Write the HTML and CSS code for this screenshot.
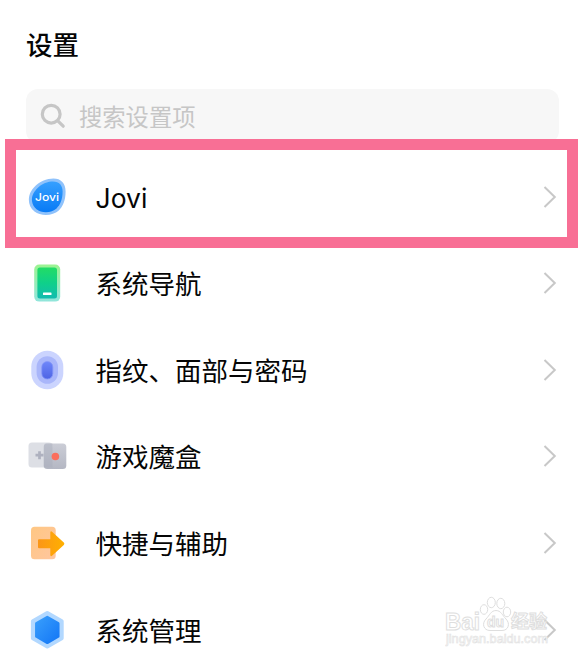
FILE: index.html
```html
<!DOCTYPE html>
<html lang="zh-CN">
<head>
<meta charset="utf-8">
<title>设置</title>
<link rel="stylesheet" href="styles.css">
</head>
<body>
<main class="screen">
  <h1 class="title">设置</h1>
  <div class="search">
    <svg class="search-icon" viewBox="0 0 26 26"><circle cx="11.2" cy="11.2" r="8.9"/><path d="M17.8 17.8L23.2 23.2"/></svg>
    <span>搜索设置项</span>
  </div>
  <ul class="list">
    <li class="row">
      <svg class="icon" viewBox="0 0 40 40">
        <defs><linearGradient id="jovi" x1="0" y1="0" x2="0" y2="1"><stop offset="0" stop-color="#36a0ff"/><stop offset="1" stop-color="#087af5"/></linearGradient></defs>
        <path fill="#8fc2fb" d="M21.500 2C32 -.3 38.600 4.500 38.600 14.500C38.600 23 36 29.500 31.500 33.800C26 39 13.500 39.400 7.500 34.500C1 29.500 .5 20.500 4 14.500C7.500 8.500 14 3.600 21.500 2Z"/>
        <path fill="url(#jovi)" d="M22.300 4.800C31 3.200 35.600 7 35.600 14.800C35.600 21.800 33.500 27.500 29.500 31.500C25 36 14.500 36.400 9.500 32.300C4.500 28 3.700 21.500 6.500 16.300C9.800 10.500 15.500 6.200 22.300 4.800Z"/>
        <text class="jovi-mark" x="8" y="24" textLength="24" lengthAdjust="spacingAndGlyphs">Jovi</text>
      </svg>
      <span class="label latin">Jovi</span>
      <svg class="chevron" viewBox="0 0 14 24"><path d="M1.500 2L11.800 12L1.500 22"/></svg>
    </li>
    <li class="row">
      <svg class="icon" viewBox="0 0 40 40">
        <defs>
          <linearGradient id="navOuter" x1="0" y1="0" x2="0" y2="1"><stop offset="0" stop-color="#9cf391"/><stop offset="1" stop-color="#91e5dc"/></linearGradient>
          <linearGradient id="navInner" x1="0" y1="0" x2="0" y2="1"><stop offset="0" stop-color="#22dc65"/><stop offset=".5" stop-color="#0fd08a"/><stop offset="1" stop-color="#13bbb0"/></linearGradient>
        </defs>
        <rect x="7.200" y="1.600" width="26" height="37" rx="5" fill="url(#navOuter)"/>
        <rect x="10.400" y="4.600" width="19.600" height="31" rx="2.500" fill="url(#navInner)"/>
        <rect x="16" y="29.500" width="8.500" height="2.500" rx=".6" fill="#fff"/>
      </svg>
      <span class="label">系统导航</span>
      <svg class="chevron" viewBox="0 0 14 24"><path d="M1.500 2L11.800 12L1.500 22"/></svg>
    </li>
    <li class="row">
      <svg class="icon" viewBox="0 0 40 40">
        <defs><linearGradient id="finger" x1="0" y1="0" x2="0" y2="1"><stop offset="0" stop-color="#6f87fa"/><stop offset="1" stop-color="#4e64e4"/></linearGradient></defs>
        <rect x="4.300" y=".8" width="32" height="38.500" rx="16" fill="#cbd4fe"/>
        <rect x="9.600" y="6.200" width="21.400" height="27.600" rx="10.700" fill="#a9b6fa"/>
        <rect x="14.800" y="11.500" width="11" height="17.500" rx="5.500" fill="url(#finger)" stroke="#8496f8" stroke-width=".8"/>
      </svg>
      <span class="label">指纹、面部与密码</span>
      <svg class="chevron" viewBox="0 0 14 24"><path d="M1.500 2L11.800 12L1.500 22"/></svg>
    </li>
    <li class="row">
      <svg class="icon" viewBox="0 0 40 40">
        <defs><linearGradient id="game" x1="0" y1="0" x2="0" y2="1"><stop offset="0" stop-color="#cbcdd6"/><stop offset="1" stop-color="#b4b7c3"/></linearGradient></defs>
        <rect x="1.500" y="6.600" width="24" height="25" rx="3.500" fill="#dddfe5"/>
        <rect x="16.800" y="7.600" width="22.500" height="25.400" rx="3.500" fill="url(#game)"/>
        <path fill="#a6aab8" fill-opacity=".4" d="M19.300 7.600H25.400V31.600H16.800V11Q16.800 7.600 19.300 7.600Z"/>
        <path d="M12.500 15.200V23.200M8.500 19.200H16.500" stroke="#aeb1bf" stroke-width="2.700"/>
        <circle cx="28.400" cy="20.500" r="3.800" fill="#fb6e5d"/>
      </svg>
      <span class="label">游戏魔盒</span>
      <svg class="chevron" viewBox="0 0 14 24"><path d="M1.500 2L11.800 12L1.500 22"/></svg>
    </li>
    <li class="row">
      <svg class="icon" viewBox="0 0 40 40">
        <defs>
          <linearGradient id="card" x1="0" y1="0" x2="1" y2="1"><stop offset="0" stop-color="#ffc783"/><stop offset="1" stop-color="#ffc69f"/></linearGradient>
          <linearGradient id="arrow" x1="0" y1="0" x2="1" y2="0"><stop offset="0" stop-color="#fb9618"/><stop offset="1" stop-color="#ffb000"/></linearGradient>
        </defs>
        <rect x="4" y="3.700" width="24.700" height="32.600" rx="3.500" fill="url(#card)"/>
        <path fill="url(#arrow)" d="M12 16.200Q11 16.200 11 17.200V24.300Q11 25.300 12 25.300H23.300V32Q23.600 34 25.300 32.600L36.800 22Q38 20.800 36.800 19.600L25.300 9Q23.600 7.500 23.300 9.500V16.200Z"/>
      </svg>
      <span class="label">快捷与辅助</span>
      <svg class="chevron" viewBox="0 0 14 24"><path d="M1.500 2L11.800 12L1.500 22"/></svg>
    </li>
    <li class="row">
      <svg class="icon" viewBox="0 0 40 40">
        <defs><linearGradient id="hex" x1="0" y1="0" x2="1" y2="1"><stop offset="0" stop-color="#389efc"/><stop offset="1" stop-color="#1477f6"/></linearGradient></defs>
        <path fill="#b2d8ff" stroke="#b2d8ff" stroke-width="4" stroke-linejoin="round" d="M20.300 3L34.700 11.300V28.300L20.300 36.600L5.900 28.300V11.300Z"/>
        <path fill="url(#hex)" stroke="url(#hex)" stroke-width="2.500" stroke-linejoin="round" d="M20.300 7L31.300 13.400V26.400L20.300 32.800L9.300 26.400V13.400Z"/>
      </svg>
      <span class="label">系统管理</span>
      <svg class="chevron" viewBox="0 0 14 24"><path d="M1.500 2L11.800 12L1.500 22"/></svg>
    </li>
  </ul>
  <div class="highlight"></div>
  <svg class="watermark" viewBox="0 0 112 54">
    <g class="outline">
      <text class="brand" x="0" y="34.500" textLength="35" lengthAdjust="spacingAndGlyphs">Bai</text>
      <path d="M51 15.500C46 15.500 44.500 20.500 41 24C36.500 28.500 38.500 35.500 45 35.500H57C63.500 35.500 65.500 28.500 61 24C57.500 20.500 56 15.500 51 15.500Z"/>
      <ellipse cx="39" cy="14.500" rx="3.700" ry="4.800"/><ellipse cx="46.300" cy="7.500" rx="4" ry="5.200"/><ellipse cx="55.800" cy="8.500" rx="4" ry="5.200"/><ellipse cx="62" cy="17" rx="3.700" ry="4.800"/>
      <text class="du" x="42" y="32" textLength="17" lengthAdjust="spacingAndGlyphs">du</text>
      <text class="cjk" x="66" y="33" textLength="36">经验</text>
    </g>
    <text class="site" x="1" y="47.500" textLength="102" lengthAdjust="spacingAndGlyphs">jingyan.baidu.com</text>
  </svg>
</main>
</body>
</html>
```
FILE: styles.css
```css
* { box-sizing: border-box; }
body {
  margin: 0;
  background: #fff;
  color: #050505;
  font-family: "Noto Sans CJK SC", sans-serif;
}
.screen {
  position: relative;
  width: 581px;
  height: 660px;
  overflow: hidden;
  padding: 24px 22px 0 26px;
}
.title {
  margin: 0;
  height: 40px;
  line-height: 40px;
  font-size: 26.5px;
  font-weight: 500;
}
.search {
  display: flex;
  align-items: center;
  gap: 13px;
  height: 54px;
  margin-top: 25px;
  padding-left: 14px;
  border-radius: 12px;
  background: #f7f7f7;
  color: #c6c6c6;
  font-size: 23.3px;
}
.search-icon {
  width: 26px;
  height: 26px;
  fill: none;
  stroke: #c6c6c6;
  stroke-width: 3.2;
  stroke-linecap: round;
}
.list {
  margin: 10.300px 0 0;
  padding: 0;
  list-style: none;
}
.row {
  display: flex;
  align-items: center;
  height: 86.600px;
  padding: 0 2px 0 1px;
}
.icon {
  width: 40px;
  height: 40px;
}
.label {
  flex: 1;
  margin-left: 28.600px;
  font-size: 26.500px;
  line-height: 40px;
}
.latin {
  margin-top: 3px;
  font-family: Inter, sans-serif;
  font-size: 26.500px;
}
.chevron {
  width: 14px;
  height: 24px;
  fill: none;
  stroke: #c8c8c8;
  stroke-width: 2;
}
.jovi-mark {
  fill: #fff;
  font: 500 11px Inter, sans-serif;
}
.highlight {
  position: absolute;
  left: 5px;
  top: 139px;
  width: 573px;
  height: 109px;
  border: 11px solid #f86f95;
}
.watermark {
  position: absolute;
  left: 445px;
  top: 595px;
  width: 112px;
  height: 54px;
}
.outline {
  fill: #fff;
  stroke: #dedede;
  stroke-width: 1;
}
.brand { font: bold 24px "Liberation Sans", sans-serif; }
.du { font: bold 14px "Liberation Sans", sans-serif; }
.cjk { font: bold 18px "Noto Sans CJK SC", sans-serif; }
.site {
  fill: #fff;
  stroke: #e2e2e2;
  stroke-width: .6;
  font: 12px "Liberation Sans", sans-serif;
}
```
